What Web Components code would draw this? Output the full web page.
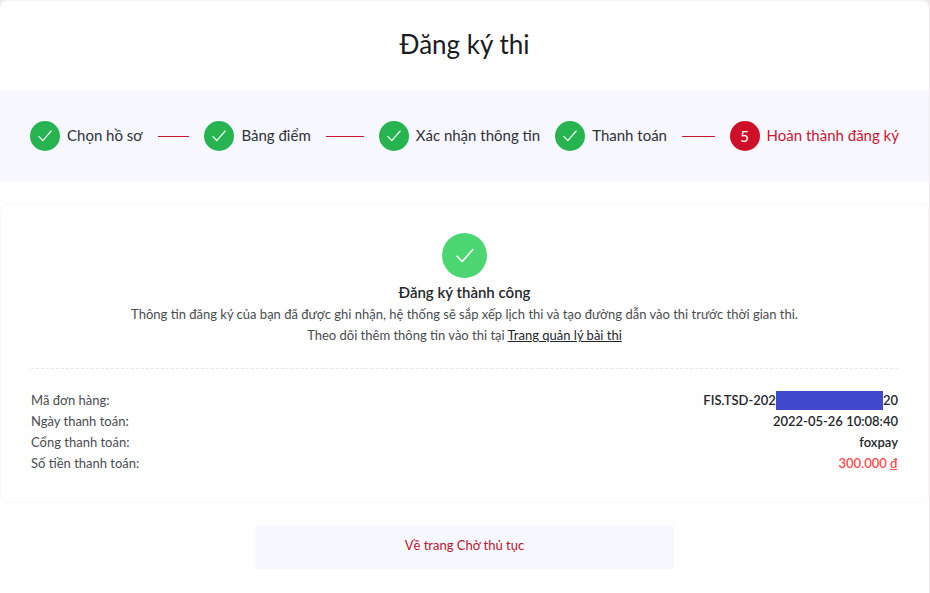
<!DOCTYPE html>
<html lang="vi">
<head>
  <meta charset="UTF-8">
  <meta name="viewport" content="width=device-width, initial-scale=1.0">
  <title>Đăng ký thi</title>
  <style>
    body {
      margin: 0;
      background: #eee9ea;
      font-family: Lato, "Open Sans", sans-serif;
      font-size: 14px;
      line-height: 20px;
      color: #4a4d50;
    }
  </style>
</head>
<body>
  <exam-page heading="Đăng ký thi">
    <step-bar slot="steps">
      <step-item done>Chọn hồ sơ</step-item>
      <step-item done>Bảng điểm</step-item>
      <step-item done>Xác nhận thông tin</step-item>
      <step-item done>Thanh toán</step-item>
      <step-item number="5">Hoàn thành đăng ký</step-item>
    </step-bar>
    <result-card>
      <span slot="title">Đăng ký thành công</span>
      <result-message></result-message>
      <order-info slot="details"></order-info>
    </result-card>
    <back-button slot="actions">Về trang Chờ thủ tục</back-button>
  </exam-page>

  <script>
    class ExamPage extends HTMLElement {
      constructor() {
        super();
        this.attachShadow({ mode: "open" });
        this.shadowRoot.innerHTML = `
          <style>
            :host {
              display: block;
            }

            main {
              box-sizing: border-box;
              min-height: 100vh;
              margin-right: 1px;
              padding-bottom: 24px;
              background: #fefefe;
              border-top: 1px solid #f5f4f5;
              border-radius: 8px 8px 0 0;
            }

            h1 {
              margin: 0;
              padding: 25px 16px 29px;
              font-size: 26px;
              line-height: 36px;
              font-weight: 400;
              text-align: center;
              color: #1b1c1e;
            }

            .content {
              padding-top: 22px;
            }

            .actions {
              display: flex;
              justify-content: center;
              padding-top: 23px;
            }
          </style>
          <main>
            <h1></h1>
            <slot name="steps"></slot>
            <div class="content"><slot></slot></div>
            <div class="actions"><slot name="actions"></slot></div>
          </main>
        `;
      }

      connectedCallback() {
        this.shadowRoot.querySelector("h1").textContent = this.getAttribute("heading");
      }
    }

    class StepBar extends HTMLElement {
      constructor() {
        super();
        this.attachShadow({ mode: "open" });
        this.shadowRoot.innerHTML = `
          <style>
            :host {
              display: block;
              background: #f6f7ff;
            }

            nav {
              display: flex;
              align-items: center;
              padding: 30px;
            }

            ::slotted(step-item) {
              flex: 1 1 0;
            }

            ::slotted(step-item:last-child) {
              flex: none;
            }
          </style>
          <nav aria-label="Các bước đăng ký"><slot></slot></nav>
        `;
      }
    }

    class StepItem extends HTMLElement {
      constructor() {
        super();
        this.attachShadow({ mode: "open" });
        this.shadowRoot.innerHTML = `
          <style>
            :host {
              box-sizing: border-box;
              display: flex;
              align-items: center;
              padding-right: 15px;
              font-size: 15px;
              white-space: nowrap;
              color: #2f3236;
            }

            :host(:not([done])) {
              color: #c41832;
            }

            :host(:last-child) {
              padding-right: 0;
            }

            .circle {
              display: flex;
              flex: none;
              align-items: center;
              justify-content: center;
              width: 30px;
              height: 30px;
              margin-right: 7px;
              border-radius: 50%;
              background: #cf0f28;
              color: #fff;
            }

            :host([done]) .circle {
              background: #28b351;
            }

            .label {
              flex: none;
              padding-bottom: 2px;
            }

            /* the line shrinks away when a long label leaves no room */
            .line {
              flex: 1 1 0;
              width: 0;
              min-width: 0;
              overflow: hidden;
            }

            .line span {
              display: block;
              height: 1px;
              margin-left: 15px;
              background: #c41832;
            }

            :host(:last-child) .line {
              display: none;
            }
          </style>
          <span class="circle"></span>
          <span class="label"><slot></slot></span>
          <span class="line"><span></span></span>
        `;
      }

      connectedCallback() {
        const circle = this.shadowRoot.querySelector(".circle");
        if (this.hasAttribute("done")) {
          circle.innerHTML = "<check-icon></check-icon>";
        } else {
          circle.textContent = this.getAttribute("number");
        }
      }
    }

    class CheckIcon extends HTMLElement {
      constructor() {
        super();
        this.attachShadow({ mode: "open" });
        this.shadowRoot.innerHTML = `
          <style>
            :host {
              display: block;
              width: var(--check-size, 14px);
            }

            svg {
              display: block;
              width: 100%;
            }
          </style>
          <svg viewBox="0 0 14 12" fill="none" stroke="#fff" stroke-width="1.2" aria-hidden="true">
            <path d="M0.5 6.1 L4.8 10.6 L13.5 0.7" />
          </svg>
        `;
      }
    }

    class ResultCard extends HTMLElement {
      constructor() {
        super();
        this.attachShadow({ mode: "open" });
        this.shadowRoot.innerHTML = `
          <style>
            :host {
              display: block;
            }

            section {
              padding: 29px 30px 28px;
              border: 1px solid #f7f7f8;
              border-radius: 8px;
            }

            .circle {
              --check-size: 18px;
              display: flex;
              align-items: center;
              justify-content: center;
              width: 45px;
              height: 45px;
              margin: 0 auto 4px;
              border-radius: 50%;
              background: #4bd672;
            }

            h2 {
              margin: 0;
              padding-bottom: 2px;
              font-size: 15px;
              line-height: 20px;
              font-weight: 600;
              text-align: center;
              color: #24272a;
            }

            hr {
              margin: 22px 0 21px;
              border: 0;
              border-top: 1px dashed #e6e6e8;
            }
          </style>
          <section>
            <div class="circle"><check-icon></check-icon></div>
            <h2><slot name="title"></slot></h2>
            <slot></slot>
            <hr>
            <slot name="details"></slot>
          </section>
        `;
      }
    }

    class ResultMessage extends HTMLElement {
      constructor() {
        super();
        this.attachShadow({ mode: "open" });
        this.shadowRoot.innerHTML = `
          <style>
            :host {
              display: block;
              font-size: 13px;
              line-height: 21px;
              text-align: center;
            }

            p {
              margin: 0;
            }

            a {
              color: #24272a;
              text-decoration: underline;
            }
          </style>
          <p>Thông tin đăng ký của bạn đã được ghi nhận, hệ thống sẽ sắp xếp lịch thi và tạo đường dẫn vào thi trước thời gian thi.</p>
          <p>Theo dõi thêm thông tin vào thi tại <a href="#">Trang quản lý bài thi</a></p>
        `;
      }
    }

    class OrderInfo extends HTMLElement {
      constructor() {
        super();
        this.attachShadow({ mode: "open" });
        this.shadowRoot.innerHTML = `
          <style>
            :host {
              display: block;
              font-size: 13px;
            }

            dl {
              display: flex;
              flex-direction: column;
              margin: 0;
            }

            .row {
              display: flex;
              justify-content: space-between;
              line-height: 21px;
            }

            dd {
              display: flex;
              align-items: center;
              margin: 0;
              font-weight: 600;
              color: #24272a;
            }

            .mask {
              width: 107px;
              height: 19px;
              background: #4048cc;
            }

            .price {
              color: #f84b50;
            }
          </style>
          <dl>
            <div class="row"><dt>Mã đơn hàng:</dt><dd>FIS.TSD-202<span class="mask"></span>20</dd></div>
            <div class="row"><dt>Ngày thanh toán:</dt><dd>2022-05-26 10:08:40</dd></div>
            <div class="row"><dt>Cổng thanh toán:</dt><dd>foxpay</dd></div>
            <div class="row"><dt>Số tiền thanh toán:</dt><dd class="price">300.000 ₫</dd></div>
          </dl>
        `;
      }
    }

    class BackButton extends HTMLElement {
      constructor() {
        super();
        this.attachShadow({ mode: "open" });
        this.shadowRoot.innerHTML = `
          <style>
            :host {
              display: block;
              width: 45%;
            }

            button {
              display: block;
              width: 100%;
              padding: 9px 16px 13px;
              border: 0;
              border-radius: 3px;
              background: #f6f7ff;
              font: inherit;
              font-size: 13px;
              line-height: 21px;
              color: #b8142c;
              cursor: pointer;
            }
          </style>
          <button type="button"><slot></slot></button>
        `;
      }
    }

    customElements.define("exam-page", ExamPage);
    customElements.define("step-bar", StepBar);
    customElements.define("step-item", StepItem);
    customElements.define("check-icon", CheckIcon);
    customElements.define("result-card", ResultCard);
    customElements.define("result-message", ResultMessage);
    customElements.define("order-info", OrderInfo);
    customElements.define("back-button", BackButton);
  </script>
</body>
</html>
